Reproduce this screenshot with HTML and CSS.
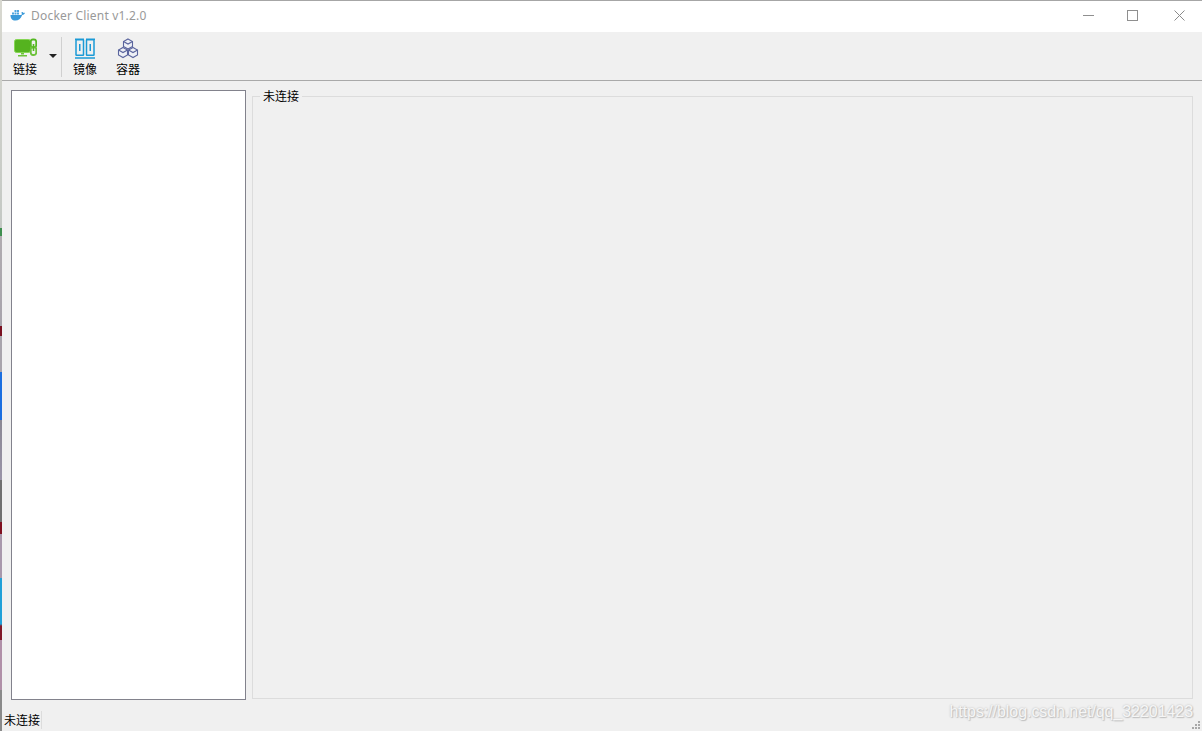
FILE: index.html
```html
<!DOCTYPE HTML>
<html>
<head>
    <title>Docker Client v1.2.0</title>
    <meta charset="utf-8" />
    <link rel="stylesheet" href="styles.css">
</head>
<body>
    <div id="screen">
        <div id="desktop-edge"></div>
        <div id="window">
            <header id="titlebar">
                <svg class="app-icon" width="16" height="12" viewBox="0 0 16 12">
                    <path d="M0.500 6h11c.4-.9.4-1.800 0-2.800.9-.3 1.500 0 2 .8.6-.2 1.100-.2 1.500 0-.6 1.300-1.500 1.900-2.800 2C10.800 9.800 8.500 11.500 5.500 11.500 2 11.500.5 9.500.5 6z" fill="#3a9ad9"/>
                    <path d="M2 3.500h2v2H2zM4.500 3.500h2v2h-2zM7 3.500h2v2H7zM4.500 1h2v2h-2zM7 1h2v2H7z" fill="#4fa6e0"/>
                </svg>
                <span class="app-title">Docker Client v1.2.0</span>
                <div class="window-controls">
                    <span class="ctl ctl-min"></span>
                    <span class="ctl ctl-max"></span>
                    <svg class="ctl-close" width="11" height="11" viewBox="0 0 11 11">
                        <path d="M0.500 0.500l10 10M10.500 0.500l-10 10" stroke="#8a8a8a" stroke-width="1" fill="none"/>
                    </svg>
                </div>
            </header>

            <nav id="toolbar">
                <div class="tool tool-link">
                    <svg width="24" height="20" viewBox="0 0 24 20">
                        <rect x="1.500" y="1.500" width="16" height="13" rx="2" fill="#55b31f" stroke="#86d654"/>
                        <path d="M8 15h3v1.500H8zM5 17h9v1.500H5z" fill="#6cc23a"/>
                        <rect x="17.800" y="1.500" width="5.400" height="8" rx="2.200" fill="none" stroke="#55b822" stroke-width="1.800"/>
                        <rect x="17.800" y="9" width="5.400" height="8" rx="2.200" fill="none" stroke="#6cc23a" stroke-width="1.800"/>
                        <path d="M20.500 6v7" stroke="#55b822" stroke-width="1.600"/>
                    </svg>
                    <span>链接</span>
                </div>
                <span class="drop-arrow"></span>
                <span class="tool-sep"></span>
                <div class="tool">
                    <svg width="22" height="21" viewBox="0 0 22 21">
                        <rect x="2" y="1.700" width="7.500" height="15.600" rx="0.500" fill="none" stroke="#1b9ad6" stroke-width="1.500"/>
                        <rect x="12.500" y="1.700" width="7.500" height="15.600" rx="0.500" fill="none" stroke="#1b9ad6" stroke-width="1.500"/>
                        <path d="M5.750 6v7M16.250 6v7" stroke="#1b9ad6" stroke-width="1.500"/>
                        <path d="M1 1.200h9M12 1.200h9M1 20h20" stroke="#1b9ad6" stroke-width="1.500"/>
                    </svg>
                    <span>镜像</span>
                </div>
                <div class="tool">
                    <svg width="22" height="21" viewBox="0 0 22 21">
                        <g fill="#eef0f6" stroke="#5b659e" stroke-width="1.100">
                            <path d="M11 1l4.500 2.500v5L11 11 6.500 8.500v-5z"/>
                            <path d="M6 9.500l4.500 2.500v5L6 19.500 1.500 17v-5z"/>
                            <path d="M16 9.500l4.500 2.500v5L16 19.500 11.500 17v-5z"/>
                            <path d="M6.500 3.500L11 6l4.500-2.500M1.500 12L6 14.500 10.500 12M11.500 12l4.500 2.500 4.500-2.500" fill="none"/>
                        </g>
                    </svg>
                    <span>容器</span>
                </div>
            </nav>

            <main id="content">
                <div id="tree-list"></div>
                <section id="group-box">
                    <span class="group-label">未连接</span>
                </section>
            </main>

            <footer id="statusbar">
                <span class="status-text">未连接</span>
                <svg class="grip" width="9" height="9" viewBox="0 0 9 9">
                    <path d="M6 0h2v2H6zM3 3h2v2H3zM6 3h2v2H6zM0 6h2v2H0zM3 6h2v2H3zM6 6h2v2H6z" fill="#a8a8a8"/>
                </svg>
            </footer>
        </div>
    </div>
    <div id="watermark">https://blog.csdn.net/qq_32201423</div>
</body>
</html>
```

FILE: styles.css
```css
/* Reset */
html, body { margin: 0; padding: 0; }
html { box-sizing: border-box; }
*, *:before, *:after { box-sizing: inherit; }

body {
    width: 1202px;
    height: 731px;
    overflow: hidden;
    background-color: #f0f0f0;
    color: #000000;
    font-family: "Noto Sans CJK SC", "Liberation Sans", sans-serif;
    font-size: 12px;
    position: relative;
}

#screen {
    display: flex;
    width: 100%;
    height: 100%;
}

/* Sliver of the desktop behind the window */
#desktop-edge {
    flex: 0 0 2px;
    background-image: linear-gradient(to bottom,
        #d8d8d0 0, #c4c8c4 228px, #3f8f4f 228px, #3f8f4f 236px,
        #b0acb0 236px, #a8a4ac 326px, #7a1020 326px, #7a1020 336px,
        #a8a4ac 336px, #a8a4ac 372px, #1b6fe0 372px, #1b6fe0 420px,
        #8a8894 420px, #9a94a8 480px, #707070 480px, #707070 522px,
        #801020 522px, #801020 534px, #a898ac 534px, #a898ac 578px,
        #20a0d8 578px, #20a0d8 624px, #801828 626px, #801828 640px,
        #b090a8 640px, #b090a8 690px, #8a8a8a 690px, #8a8a8a 731px);
}

#window {
    flex: 1;
    min-width: 0;
    display: flex;
    flex-direction: column;
    border-top: 1px solid #a6a6a6;
}

/* Title bar */
#titlebar {
    height: 31px;
    flex: none;
    display: flex;
    align-items: center;
    background-color: #ffffff;
    padding-left: 8px;
}

.app-icon {
    display: block;
    margin-top: -3px;
}

.app-title {
    margin-left: 5px;
    margin-top: -2px;
    color: #999999;
    font-family: "Noto Sans", "Liberation Sans", sans-serif;
    font-size: 12px;
    letter-spacing: 0.2px;
}

.window-controls {
    margin-left: auto;
    display: flex;
    align-items: center;
    margin-top: -3px;
    padding-right: 17px;
}

.ctl-min { display: block; width: 11px; height: 1px; background-color: #8f8f8f; margin-right: 33px; }
.ctl-max { display: block; width: 11px; height: 11px; border: 1px solid #8f8f8f; margin-right: 36px; }
.ctl-close { display: block; }

/* Toolbar */
#toolbar {
    height: 49px;
    flex: none;
    display: flex;
    align-items: flex-start;
    padding: 6px 0 0 10px;
    border-bottom: 1px solid #a9a9a9;
    background-color: #f0f0f0;
}

.tool {
    width: 34px;
    display: flex;
    flex-direction: column;
    align-items: center;
    line-height: 14px;
}

.tool svg { display: block; margin-bottom: 3px; }
.tool span { white-space: nowrap; }

.tool-link { width: 26px; }
.tool-link svg { margin-bottom: 4px; }

.drop-arrow {
    width: 0;
    height: 0;
    margin: 16px 0 0 11px;
    border-left: 4px solid transparent;
    border-right: 4px solid transparent;
    border-top: 4px solid #222222;
}

.tool-sep {
    width: 1px;
    height: 40px;
    margin: -1px 4px 0 4px;
    background-color: #d0d0d0;
}

.tool-sep + .tool { width: 38px; }
.tool + .tool { margin-left: 7px; }

/* Main area */
#content {
    flex: 1;
    min-height: 0;
    display: flex;
    align-items: flex-start;
    padding: 9px 9px 0 9px;
    background-color: #f0f0f0;
}

#tree-list {
    width: 235px;
    height: 610px;
    background-color: #ffffff;
    border: 1px solid #82828c;
    flex: none;
}

#group-box {
    width: 941px;
    height: 603px;
    margin: 6px 0 0 6px;
    border: 1px solid #dcdcdc;
    position: relative;
}

.group-label {
    position: absolute;
    top: -9px;
    left: 7px;
    padding: 0 3px;
    line-height: 15px;
    background-color: #f0f0f0;
}

/* Status bar */
#statusbar {
    height: 31px;
    flex: none;
    display: flex;
    align-items: flex-end;
    justify-content: space-between;
    padding-left: 2px;
    background-color: #f0f0f0;
}

.status-text {
    height: 18px;
    line-height: 18px;
    margin-bottom: 2px;
    padding-right: 1px;
    border-right: 1px solid #dcdcdc;
}

.grip { display: block; margin: 0 1px 1px 0; }

/* Blog watermark laid over the screenshot */
#watermark {
    position: absolute;
    top: 702px;
    right: 9px;
    font-family: "Liberation Sans", sans-serif;
    font-size: 16px;
    line-height: 20px;
    letter-spacing: -0.06px;
    color: #f6f6f6;
    text-shadow: 0 0 2px #b4b4b4, 1px 1px 1px #c4c4c4;
}
```
